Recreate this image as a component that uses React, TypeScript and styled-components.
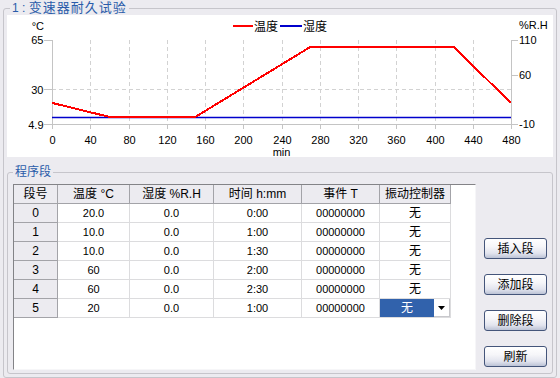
import React from 'react';
import styled, { createGlobalStyle } from 'styled-components';

const FONT = '"Liberation Sans", "Noto Sans CJK SC", sans-serif';

const Global = createGlobalStyle`
  html, body { margin: 0; padding: 0; }
  body {
    width: 560px; height: 378px; overflow: hidden;
    background: #ECEBF0;
    font-family: ${FONT};
  }
`;

const Window = styled.div`
  width: 560px;
  height: 378px;
  box-sizing: border-box;
  padding: 0 3px;
  background: #ECEBF0;
`;

const Group = styled.fieldset<{ $h: number; $pl: number; $pr: number; $pb: number; $mt?: number }>`
  box-sizing: border-box;
  margin: ${(p) => p.$mt ?? 0}px 0 0 0;
  height: ${(p) => p.$h}px;
  min-width: 0;
  border: 1px solid #C6C5CB;
  border-radius: 3px;
  padding: 0 ${(p) => p.$pr}px ${(p) => p.$pb}px ${(p) => p.$pl}px;
`;

const Legend = styled.legend<{ $ml?: number; $size: number; $ls?: number }>`
  margin-left: ${(p) => p.$ml ?? 0}px;
  padding: 0 2px;
  height: 16px;
  line-height: 16px;
  font-size: ${(p) => p.$size}px;
  letter-spacing: ${(p) => p.$ls ?? 0}px;
  color: #2A5CAA;
  font-family: ${FONT};
  white-space: nowrap;
`;

const Num = styled.span`
  font-size: 12px;
  letter-spacing: 0;
`;

const ChartPanel = styled.div`
  margin-top: -1px;
  height: 142px;
  background: #FFFFFF;
`;

const ChartSvg = styled.svg`
  display: block;
`;

const Label = styled.text<{ $cjk?: boolean }>`
  font-family: ${FONT};
  font-size: ${(p) => (p.$cjk ? 12 : 11)}px;
  fill: #000000;
`;

const Body = styled.div`
  display: flex;
  gap: 8px;
  margin-top: 4px;
  height: 186px;
`;

const GridBox = styled.div`
  box-sizing: border-box;
  width: 463px;
  height: 186px;
  background: #FFFFFF;
  border-style: solid;
  border-width: 1px;
  border-color: #838387 #F6F6F8 #F6F6F8 #838387;
`;

const Grid = styled.div`
  display: grid;
  grid-template-columns: 44px 72px 84px 88px 78px 71px;
  grid-auto-rows: 19px;
  width: 437px;
`;

const Cell = styled.div<{ $head?: boolean; $cjk?: boolean }>`
  box-sizing: border-box;
  display: flex;
  align-items: center;
  justify-content: center;
  background: ${(p) => (p.$head ? '#ECEBF0' : '#FFFFFF')};
  border-right: 1px solid ${(p) => (p.$head ? '#A3A3A8' : '#DCDCDE')};
  border-bottom: 1px solid ${(p) => (p.$head ? '#A3A3A8' : '#DCDCDE')};
  font-size: ${(p) => (p.$head || p.$cjk ? 12 : 11)}px;
  line-height: 1;
  color: #000000;
  white-space: nowrap;
`;

const ComboCell = styled.div`
  box-sizing: border-box;
  display: flex;
  border-right: 1px solid #DCDCDE;
  border-bottom: 1px solid #DCDCDE;
`;

const ComboValue = styled.div`
  flex: 1;
  display: flex;
  align-items: center;
  justify-content: center;
  background: #3162AC;
  color: #FFFFFF;
  font-size: 12px;
  line-height: 1;
`;

const ComboButton = styled.div`
  width: 16px;
  display: flex;
  align-items: center;
  justify-content: center;
  background: #FFFFFF;
  border-right: 1px solid #C8C8CC;
  border-bottom: 1px solid #C8C8CC;
  box-sizing: border-box;
`;

const ButtonCol = styled.div`
  display: flex;
  flex-direction: column;
  justify-content: flex-end;
  gap: 15px;
  padding-bottom: 3px;
`;

const Button = styled.button`
  box-sizing: border-box;
  width: 63px;
  height: 21px;
  padding: 0;
  border: 1px solid #44557A;
  border-radius: 3px;
  background: linear-gradient(#FFFFFF 0%, #F6F6F9 40%, #E2E4EE 75%, #BCC3D6 100%);
  font-family: ${FONT};
  font-size: 12px;
  line-height: 1;
  color: #000000;
`;

const X0 = 52;
const X1 = 511;
const YT = 40;
const YB = 124;
const xOf = (m: number) => X0 + (m / 480) * (X1 - X0);
const gx = (m: number) => Math.round(xOf(m)) + 0.5;
const yTemp = (t: number) => YB - ((t - 4.9) / (65 - 4.9)) * (YB - YT);
const yHum = (h: number) => YB - ((h + 10) / 120) * (YB - YT);

const rows = [
  { temp: '20.0', t: 20, hum: '0.0', time: '0:00', dur: 0 },
  { temp: '10.0', t: 10, hum: '0.0', time: '1:00', dur: 60 },
  { temp: '10.0', t: 10, hum: '0.0', time: '1:30', dur: 90 },
  { temp: '60', t: 60, hum: '0.0', time: '2:00', dur: 120 },
  { temp: '60', t: 60, hum: '0.0', time: '2:30', dur: 150 },
  { temp: '20', t: 20, hum: '0.0', time: '1:00', dur: 60 },
];

const GRID = '#D2D2D2';
const AXIS = '#C4C4C4';

function Chart() {
  let acc = 0;
  const pts = rows
    .map((r) => {
      acc += r.dur;
      return `${xOf(acc).toFixed(1)},${yTemp(r.t).toFixed(1)}`;
    })
    .join(' ');
  const ticksX = Array.from({ length: 13 }, (_, i) => i * 40);
  const humY = Math.round(yHum(0)) + 0.5;
  return (
    <ChartSvg width={546} height={142} viewBox="7 15 546 142">
      {ticksX.slice(1, 12).map((m) => (
        <line key={'g' + m} x1={gx(m)} x2={gx(m)} y1={YT} y2={YB} stroke={GRID} strokeDasharray="4 3" />
      ))}
      <line x1={X0} x2={X1} y1={89.5} y2={89.5} stroke={GRID} strokeDasharray="4 3" />
      <line x1={X0 + 0.5} x2={X0 + 0.5} y1={YT} y2={YB + 1} stroke={AXIS} />
      <line x1={X1 + 0.5} x2={X1 + 0.5} y1={YT} y2={YB + 1} stroke={AXIS} />
      <line x1={X0} x2={X1 + 1} y1={YB + 0.5} y2={YB + 0.5} stroke={AXIS} />
      {[40, 89, 124].map((y) => (
        <line key={'lt' + y} x1={44} x2={X0} y1={y + 0.5} y2={y + 0.5} stroke={AXIS} />
      ))}
      {[40, 75, 124].map((y) => (
        <line key={'rt' + y} x1={X1} x2={518} y1={y + 0.5} y2={y + 0.5} stroke={AXIS} />
      ))}
      {ticksX.map((m) => (
        <line key={'bt' + m} x1={gx(m)} x2={gx(m)} y1={YB} y2={YB + 5} stroke={AXIS} />
      ))}
      <line x1={X0} x2={X1} y1={humY} y2={humY} stroke="#0000CC" strokeWidth={1.6} />
      <polyline points={pts} fill="none" stroke="#FF0000" strokeWidth={2} shapeRendering="crispEdges" />

      <Label x={44} y={30} textAnchor="end">°C</Label>
      <Label x={43.5} y={44} textAnchor="end">65</Label>
      <Label x={43.5} y={93.5} textAnchor="end">30</Label>
      <Label x={43.5} y={128.5} textAnchor="end">4.9</Label>
      <Label x={519} y={29}>%R.H</Label>
      <Label x={519} y={44}>110</Label>
      <Label x={519} y={79}>60</Label>
      <Label x={519} y={128}>-10</Label>
      {ticksX.map((m) => (
        <Label key={'xl' + m} x={gx(m)} y={143.5} textAnchor="middle">
          {m}
        </Label>
      ))}
      <Label x={281.5} y={155.5} textAnchor="middle">min</Label>

      <line x1={233} x2={253} y1={26} y2={26} stroke="#FF0000" strokeWidth={2} />
      <Label $cjk x={254} y={30.5}>温度</Label>
      <line x1={280} x2={302} y1={26} y2={26} stroke="#0000CC" strokeWidth={2} />
      <Label $cjk x={303} y={30.5}>湿度</Label>
    </ChartSvg>
  );
}

const headers = ['段号', '温度 °C', '湿度 %R.H', '时间 h:mm', '事件 T', '振动控制器'];

export default function App() {
  return (
    <>
      <Global />
      <Window>
        <Group $h={378} $pl={3} $pr={3} $pb={3}>
          <Legend $ml={3} $size={13} $ls={1}>
            <Num>1 : </Num>变速器耐久试验
          </Legend>
          <ChartPanel>
            <Chart />
          </ChartPanel>
          <Group $h={210} $pl={5} $pr={5} $pb={3} $mt={7}>
            <Legend $size={12}>程序段</Legend>
            <Body>
              <GridBox>
                <Grid>
                  {headers.map((h) => (
                    <Cell key={h} $head>
                      {h}
                    </Cell>
                  ))}
                  {rows.map((r, i) => (
                    <React.Fragment key={i}>
                      <Cell $head>{i}</Cell>
                      <Cell>{r.temp}</Cell>
                      <Cell>{r.hum}</Cell>
                      <Cell>{r.time}</Cell>
                      <Cell>00000000</Cell>
                      {i === rows.length - 1 ? (
                        <ComboCell>
                          <ComboValue>无</ComboValue>
                          <ComboButton>
                            <svg width={7} height={4} viewBox="0 0 7 4">
                              <polygon points="0,0 7,0 3.5,4" fill="#000" />
                            </svg>
                          </ComboButton>
                        </ComboCell>
                      ) : (
                        <Cell $cjk>无</Cell>
                      )}
                    </React.Fragment>
                  ))}
                </Grid>
              </GridBox>
              <ButtonCol>
                <Button>插入段</Button>
                <Button>添加段</Button>
                <Button>删除段</Button>
                <Button>刷新</Button>
              </ButtonCol>
            </Body>
          </Group>
        </Group>
      </Window>
    </>
  );
}
